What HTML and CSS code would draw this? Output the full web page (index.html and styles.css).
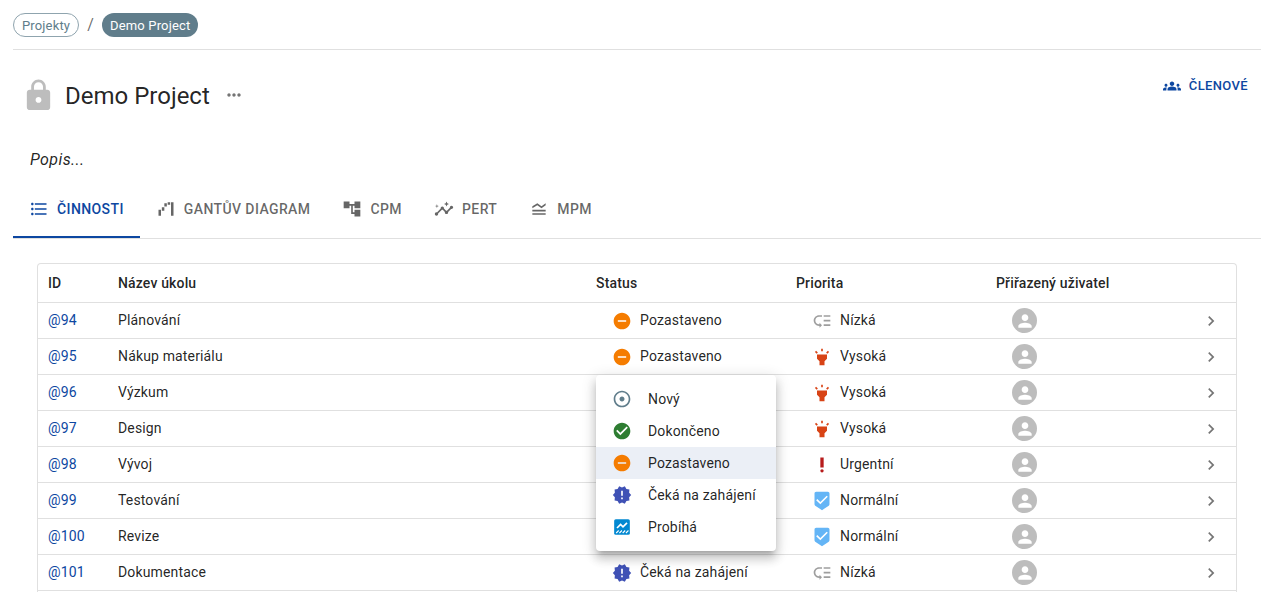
FILE: index.html
```
<!DOCTYPE html>
<html lang="cs">
<head>
<meta charset="utf-8">
<title>Demo Project</title>
<link rel="stylesheet" href="styles.css">
</head>
<body>
<svg class="sprite" aria-hidden="true">
  <symbol id="lock" viewBox="0 0 24 24"><path d="M18 8h-1V6c0-2.76-2.24-5-5-5S7 3.24 7 6v2H6c-1.1 0-2 .9-2 2v10c0 1.1.9 2 2 2h12c1.1 0 2-.9 2-2V10c0-1.1-.9-2-2-2zm-6 9c-1.1 0-2-.9-2-2s.9-2 2-2 2 .9 2 2-.9 2-2 2zm3.100-9H8.900V6c0-1.710 1.390-3.100 3.100-3.100s3.100 1.390 3.100 3.100v2z"/></symbol>
  <symbol id="more" viewBox="0 0 24 24"><path d="M6 10c-1.100 0-2 .9-2 2s.9 2 2 2 2-.9 2-2-.9-2-2-2zm12 0c-1.100 0-2 .9-2 2s.9 2 2 2 2-.9 2-2-.9-2-2-2zm-6 0c-1.100 0-2 .9-2 2s.9 2 2 2 2-.9 2-2-.9-2-2-2z"/></symbol>
  <symbol id="groups" viewBox="0 0 24 24"><path d="M12 12.750c1.630 0 3.070.39 4.240.9 1.080.48 1.760 1.560 1.760 2.730V18H6v-1.610c0-1.180.68-2.260 1.760-2.730 1.170-.52 2.610-.91 4.240-.91zM4 13c1.100 0 2-.9 2-2s-.9-2-2-2-2 .9-2 2 .9 2 2 2zm1.130 1.100c-.37-.06-.74-.1-1.130-.1-.99 0-1.930.21-2.780.58C.48 14.900 0 15.620 0 16.430V18h4.500v-1.610c0-.83.23-1.610.63-2.290zM20 13c1.100 0 2-.9 2-2s-.9-2-2-2-2 .9-2 2 .9 2 2 2zm4 3.430c0-.81-.48-1.530-1.220-1.850-.85-.37-1.790-.58-2.780-.58-.39 0-.76.04-1.130.1.4.68.63 1.460.63 2.290V18H24v-1.570zM12 6c1.660 0 3 1.340 3 3s-1.340 3-3 3-3-1.340-3-3 1.340-3 3-3z"/></symbol>
  <symbol id="list" viewBox="0 0 24 24"><path d="M4 10.500c-.83 0-1.500.67-1.500 1.500s.67 1.500 1.500 1.500 1.500-.67 1.500-1.500-.67-1.500-1.500-1.500zm0-6c-.83 0-1.500.67-1.500 1.500S3.170 7.500 4 7.500 5.500 6.830 5.500 6 4.830 4.500 4 4.500zm0 12c-.83 0-1.500.68-1.500 1.500s.68 1.500 1.500 1.500 1.500-.68 1.500-1.500-.67-1.500-1.500-1.500zM7 19h14v-2H7v2zm0-6h14v-2H7v2zm0-8v2h14V5H7z"/></symbol>
  <symbol id="waterfall" viewBox="0 0 24 24"><path d="M18 4h3v16h-3zM3 13h3v7H3zm11-9h3v3h-3zm-4 1h3v4h-3zm-3 5h3v4H7z"/></symbol>
  <symbol id="tree" viewBox="0 0 24 24"><path d="M22 11V3h-7v3H9V3H2v8h7V8h2v10h4v3h7v-8h-7v3h-2V8h2v3z"/></symbol>
  <symbol id="insights" viewBox="0 0 24 24"><path d="M21 8c-1.450 0-2.260 1.440-1.930 2.510l-3.550 3.560c-.3-.09-.74-.09-1.040 0l-2.550-2.550C12.270 10.450 11.460 9 10 9c-1.450 0-2.270 1.440-1.930 2.520l-4.560 4.550C2.440 15.740 1 16.550 1 18c0 1.100.9 2 2 2 1.450 0 2.260-1.440 1.930-2.510l4.550-4.560c.3.09.74.09 1.040 0l2.550 2.550C12.730 16.550 13.540 18 15 18c1.450 0 2.270-1.440 1.930-2.520l3.560-3.550C21.560 12.260 23 11.450 23 10c0-1.100-.9-2-2-2zM15 9l.94-2.070L18 6l-2.060-.93L15 3l-.92 2.070L12 6l2.080.93zM3.500 11L4 9l2-.5L4 8l-.5-2L3 8l-2 .5L3 9z"/></symbol>
  <symbol id="legend" viewBox="0 0 24 24"><path d="M20 15H4v-2h16v2zm0 2H4v2h16v-2zm-5-6 5-3.550V5l-5 3.550L10 5 4 8.660V11l5.920-3.610L15 11z"/></symbol>
  <symbol id="new" viewBox="0 0 24 24"><path d="M12 2C6.490 2 2 6.490 2 12s4.490 10 10 10 10-4.490 10-10S17.510 2 12 2zm0 18c-4.410 0-8-3.590-8-8s3.590-8 8-8 8 3.590 8 8-3.590 8-8 8zm3-8c0 1.660-1.340 3-3 3s-3-1.340-3-3 1.340-3 3-3 3 1.340 3 3z"/></symbol>
  <symbol id="done" viewBox="0 0 24 24"><path d="M12 2C6.480 2 2 6.480 2 12s4.480 10 10 10 10-4.480 10-10S17.520 2 12 2zm-2 15l-5-5 1.410-1.410L10 14.170l7.590-7.590L19 8l-9 9z"/></symbol>
  <symbol id="paused" viewBox="0 0 24 24"><path d="M12 2C6.480 2 2 6.480 2 12s4.480 10 10 10 10-4.480 10-10S17.520 2 12 2zm5 11H7v-2h10v2z"/></symbol>
  <symbol id="waiting" viewBox="0 0 24 24"><path d="M23 12l-2.440-2.780.34-3.680-3.610-.82-1.890-3.180L12 3 8.600 1.540 6.710 4.720l-3.610.81.34 3.680L1 12l2.440 2.780-.34 3.690 3.610.82 1.890 3.180L12 21l3.400 1.460 1.890-3.180 3.610-.82-.34-3.680L23 12zm-10 5h-2v-2h2v2zm0-4h-2V7h2v6z"/></symbol>
  <symbol id="running" viewBox="0 0 24 24"><rect x="2.600" y="2.600" width="18.800" height="18.800" rx="2"/><path class="mark" d="m6 13.200 4.300-4.300 2.900 2.900 4.800-4.800"/><path class="hatch" d="m5 19.200 3-3m.9 3 3-3m.9 3 3-3m.9 3 3-3"/></symbol>
  <symbol id="low" viewBox="0 0 24 24"><path d="M14 5h8v2h-8zm0 5.500h8v2h-8zm0 5.500h8v2h-8zM2 11.500C2 15.080 4.920 18 8.500 18H9v2l3-3-3-3v2h-.5C6.020 16 4 13.980 4 11.500S6.020 7 8.500 7H12V5H8.500C4.920 5 2 7.920 2 11.500z"/></symbol>
  <symbol id="high" viewBox="0 0 24 24"><path d="M6 14l3 3v5h6v-5l3-3V9H6zm5-12h2v3h-2zM3.500 5.875L4.914 4.460l2.120 2.122L5.620 7.997zm13.460.710l2.123-2.120 1.414 1.414L18.375 8z"/></symbol>
  <symbol id="urgent" viewBox="0 0 24 24"><circle cx="12" cy="19" r="2"/><path d="M10 3h4v12h-4z"/></symbol>
  <symbol id="normal" viewBox="0 0 24 24"><path d="M19 1H5c-1.100 0-1.990.9-1.990 2L3 15.930c0 .69.35 1.300.88 1.660L12 23l8.110-5.410c.53-.36.88-.97.88-1.660L21 3c0-1.100-.9-2-2-2zm-9 15l-5-5 1.410-1.410L10 13.170l7.590-7.590L19 7l-9 9z"/></symbol>
  <symbol id="person" viewBox="0 0 24 24"><path d="M12 12c2.210 0 4-1.790 4-4s-1.790-4-4-4-4 1.790-4 4 1.790 4 4 4zm0 2c-2.670 0-8 1.340-8 4v2h16v-2c0-2.660-5.330-4-8-4z"/></symbol>
  <symbol id="chevron" viewBox="0 0 24 24"><path d="M10 6 8.590 7.410 13.170 12l-4.580 4.590L10 18l6-6z"/></symbol>
</svg>

<nav class="breadcrumbs">
  <a class="chip">Projekty</a><span class="slash">/</span><a class="chip chip-active">Demo Project</a>
</nav>

<header class="header">
  <svg class="lock"><use href="#lock"/></svg>
  <h1>Demo Project</h1>
  <svg class="more"><use href="#more"/></svg>
  <button class="members"><svg><use href="#groups"/></svg>Členové</button>
</header>

<p class="description">Popis...</p>

<div class="tabs">
  <a class="tab tab-active"><svg><use href="#list"/></svg>Činnosti</a>
  <a class="tab"><svg><use href="#waterfall"/></svg>Gantův diagram</a>
  <a class="tab"><svg><use href="#tree"/></svg>CPM</a>
  <a class="tab"><svg><use href="#insights"/></svg>PERT</a>
  <a class="tab"><svg><use href="#legend"/></svg>MPM</a>
</div>

<main class="table">
  <div class="row head"><span>ID</span><span>Název úkolu</span><span>Status</span><span>Priorita</span><span>Přiřazený uživatel</span></div>
  <div class="row"><a class="text">@94</a><span class="text">Plánování</span><span class="value"><svg class="paused"><use href="#paused"/></svg><span class="text">Pozastaveno</span></span><span class="value"><svg class="low"><use href="#low"/></svg><span class="text">Nízká</span></span><span class="avatar"><svg><use href="#person"/></svg></span><svg class="chevron"><use href="#chevron"/></svg></div>
  <div class="row"><a class="text">@95</a><span class="text">Nákup materiálu</span><span class="value"><svg class="paused"><use href="#paused"/></svg><span class="text">Pozastaveno</span></span><span class="value"><svg class="high"><use href="#high"/></svg><span class="text">Vysoká</span></span><span class="avatar"><svg><use href="#person"/></svg></span><svg class="chevron"><use href="#chevron"/></svg></div>
  <div class="row"><a class="text">@96</a><span class="text">Výzkum</span>
    <div class="menu-anchor">
      <div class="menu">
        <div class="item"><svg class="new"><use href="#new"/></svg>Nový</div>
        <div class="item"><svg class="done"><use href="#done"/></svg>Dokončeno</div>
        <div class="item selected"><svg class="paused"><use href="#paused"/></svg>Pozastaveno</div>
        <div class="item"><svg class="waiting"><use href="#waiting"/></svg>Čeká na zahájení</div>
        <div class="item"><svg class="running"><use href="#running"/></svg>Probíhá</div>
      </div>
    </div>
    <span class="value"><svg class="high"><use href="#high"/></svg><span class="text">Vysoká</span></span><span class="avatar"><svg><use href="#person"/></svg></span><svg class="chevron"><use href="#chevron"/></svg></div>
  <div class="row"><a class="text">@97</a><span class="text">Design</span><span></span><span class="value"><svg class="high"><use href="#high"/></svg><span class="text">Vysoká</span></span><span class="avatar"><svg><use href="#person"/></svg></span><svg class="chevron"><use href="#chevron"/></svg></div>
  <div class="row"><a class="text">@98</a><span class="text">Vývoj</span><span></span><span class="value"><svg class="urgent"><use href="#urgent"/></svg><span class="text">Urgentní</span></span><span class="avatar"><svg><use href="#person"/></svg></span><svg class="chevron"><use href="#chevron"/></svg></div>
  <div class="row"><a class="text">@99</a><span class="text">Testování</span><span></span><span class="value"><svg class="normal"><use href="#normal"/></svg><span class="text">Normální</span></span><span class="avatar"><svg><use href="#person"/></svg></span><svg class="chevron"><use href="#chevron"/></svg></div>
  <div class="row"><a class="text">@100</a><span class="text">Revize</span><span></span><span class="value"><svg class="normal"><use href="#normal"/></svg><span class="text">Normální</span></span><span class="avatar"><svg><use href="#person"/></svg></span><svg class="chevron"><use href="#chevron"/></svg></div>
  <div class="row"><a class="text">@101</a><span class="text">Dokumentace</span><span class="value"><svg class="waiting"><use href="#waiting"/></svg><span class="text">Čeká na zahájení</span></span><span class="value"><svg class="low"><use href="#low"/></svg><span class="text">Nízká</span></span><span class="avatar"><svg><use href="#person"/></svg></span><svg class="chevron"><use href="#chevron"/></svg></div>
  <div class="row"></div>
</main>
</body>
</html>
```
FILE: styles.css
```
* { box-sizing: border-box; }

html { overflow: hidden; }

body {
  margin: 0;
  padding: 0 8px 0 13px;
  height: 592px;
  overflow: hidden;
  font: 14px/20px Roboto, sans-serif;
  letter-spacing: 0.15px;
  color: rgba(0, 0, 0, 0.87);
  background: #fff;
}

svg { fill: currentColor; flex: none; width: 20px; height: 20px; }
.sprite { display: none; }

.breadcrumbs {
  display: flex;
  align-items: center;
  height: 50px;
  border-bottom: 1px solid #e0e0e0;
}
.chip {
  height: 24px;
  padding: 0 8px;
  border: 1px solid #8fa4ae;
  border-radius: 12px;
  font-size: 13px;
  line-height: 24px;
  color: #607d8b;
}
.chip-active { padding: 1px 8px 0; border: 0; background: #607d8b; color: #fff; }
.slash { width: 23px; text-align: center; font-size: 16px; color: rgba(0, 0, 0, 0.6); }

.header { display: flex; align-items: center; height: 90px; padding: 0 0 0 8px; }
.lock { width: 35px; height: 35px; color: #bdbdbd; }
h1 { margin: 2px 0 0 9px; font-size: 24px; line-height: 32px; font-weight: 400; letter-spacing: 0; }
.more { margin-left: 14px; color: #757575; }
.members {
  display: flex;
  align-items: center;
  gap: 8px;
  margin: -18px 13px 0 auto;
  padding: 0;
  border: 0;
  background: none;
  font: 500 13px/22px Roboto, sans-serif;
  letter-spacing: 0.37px;
  text-transform: uppercase;
  color: #0d47a1;
}
.members svg { width: 18px; height: 18px; }

.description { margin: 0; padding: 8px 17px; height: 40px; font-size: 16px; line-height: 24px; letter-spacing: 0.4px; font-style: italic; }

.tabs { display: flex; height: 59px; border-bottom: 1px solid #e0e0e0; }
.tab {
  display: flex;
  align-items: center;
  gap: 8px;
  height: 58px;
  padding: 0 16px;
  font-weight: 500;
  letter-spacing: 0.4px;
  text-transform: uppercase;
  color: rgba(0, 0, 0, 0.6);
}
.tab-active { color: #0d47a1; box-shadow: inset 0 -2px #0d47a1; }

.table { width: 1200px; margin: 24px 0 0 24px; border: 1px solid #e0e0e0; border-bottom: 0; border-radius: 4px 4px 0 0; }
.row {
  display: grid;
  grid-template-columns: 70px 478px 200px 200px 205px 20px;
  align-items: center;
  height: 36px;
  padding-left: 10px;
  border-bottom: 1px solid #e0e0e0;
}
.row a { color: #0d47a1; }
.text { padding-bottom: 2px; }
.head { height: 39px; font-weight: 500; }
.value { display: flex; align-items: center; gap: 8px; padding-left: 16px; }
.avatar {
  display: grid;
  place-items: center;
  width: 25px;
  height: 25px;
  margin-left: 16px;
  border-radius: 50%;
  background: #bdbdbd;
  color: #fff;
}
.chevron { color: #757575; }

.menu-anchor { position: relative; align-self: start; }
.menu {
  position: absolute;
  z-index: 1;
  top: 0;
  left: 0;
  width: 180px;
  padding: 8px 0;
  border-radius: 4px;
  background: #fff;
  box-shadow: 0 5px 5px -3px rgba(0, 0, 0, 0.2), 0 8px 10px 1px rgba(0, 0, 0, 0.14), 0 3px 14px 2px rgba(0, 0, 0, 0.12);
}
.item { display: flex; align-items: center; gap: 16px; height: 32px; padding-left: 16px; }
.selected { background: #ebeff6; }

.new { color: #607d8b; }
.done { color: #2e7d32; }
.paused { color: #f57c00; }
.waiting { color: #3f51b5; }
.running { color: #0288d1; }
.low { color: #9e9e9e; }
.high { color: #d84315; }
.urgent { color: #b71c1c; }
.normal { color: #64b5f6; }
.mark { fill: none; stroke: #fff; stroke-width: 2; }
.hatch { fill: none; stroke: #fff; stroke-width: 1.3; }
```
